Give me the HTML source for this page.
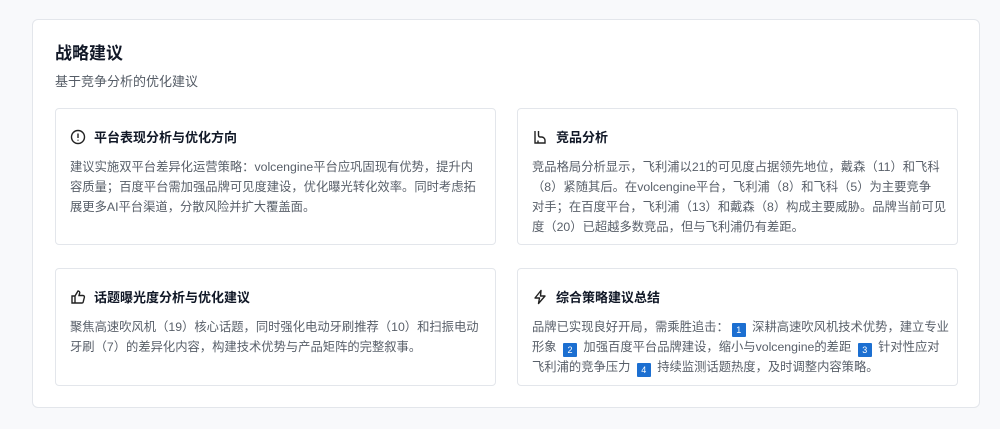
<!DOCTYPE html>
<html><head><meta charset="utf-8"><style>
*{margin:0;padding:0;box-sizing:border-box}
body{width:1000px;height:429px;background:#f8f9fb;font-family:"Liberation Sans","Noto Sans CJK SC",sans-serif;position:relative;overflow:hidden}
.outer{position:absolute;left:32px;top:19px;width:948px;height:389px;background:#fff;border:1px solid #e3e6eb;border-radius:6px}
h1{position:absolute;left:55px;top:39px;font-size:17px;font-weight:bold;color:#111827}
.sub{position:absolute;left:55px;top:71px;font-size:13px;color:#555c66}
.card{position:absolute;background:#fff;border:1px solid #e3e6eb;border-radius:4px;padding:0 0 0 14px}
.t{position:absolute;left:14px;top:18px;font-size:13px;font-weight:bold;color:#111827;display:flex;align-items:center;white-space:nowrap}
.t svg{margin-right:8px}
.b{position:absolute;left:14px;top:48px;font-size:12.3px;line-height:20px;color:#585f69;white-space:nowrap}
.n{display:inline-block;width:14px;height:14px;background:#1c6fd1;color:#fff;font-size:9px;line-height:14px;text-align:center;vertical-align:-2px;margin:0 3px;border-radius:1px}
</style></head><body>
<div class="outer"></div>
<h1>战略建议</h1>
<div class="sub">基于竞争分析的优化建议</div>

<div class="card" style="left:55px;top:108px;width:441px;height:137px">
<div class="t"><svg width="16" height="16" viewBox="0 0 16 16" fill="none" stroke="#222" stroke-width="1.4"><circle cx="8" cy="8" r="6.5"/><path d="M8 4.5v4.5M8 10.8v.8"/></svg>平台表现分析与优化方向</div>
<div class="b">建议实施双平台差异化运营策略：volcengine平台应巩固现有优势，提升内<br>容质量；百度平台需加强品牌可见度建设，优化曝光转化效率。同时考虑拓<br>展更多AI平台渠道，分散风险并扩大覆盖面。</div>
</div>

<div class="card" style="left:517px;top:108px;width:441px;height:137px">
<div class="t"><svg width="16" height="16" viewBox="0 0 16 16" fill="none" stroke="#222" stroke-width="1.4"><path d="M3 2v12h10v-2.5c0-2-1.5-3.5-3.5-3.5H8c-1 0-1.5-1-1.5-2V2"/><path d="M6 14v-2.5"/></svg>竞品分析</div>
<div class="b">竞品格局分析显示，飞利浦以21的可见度占据领先地位，戴森（11）和飞科<br>（8）紧随其后。在volcengine平台，飞利浦（8）和飞科（5）为主要竞争<br>对手；在百度平台，飞利浦（13）和戴森（8）构成主要威胁。品牌当前可见<br>度（20）已超越多数竞品，但与飞利浦仍有差距。</div>
</div>

<div class="card" style="left:55px;top:268px;width:441px;height:118px">
<div class="t"><svg width="16" height="16" viewBox="0 0 16 16" fill="none" stroke="#222" stroke-width="1.4"><path d="M2 7h3v7H2zM5 7l3-5c1 0 2 .8 1.7 2L9 6.5h4c1 0 1.6.8 1.4 1.7l-1.2 4.7c-.2.7-.8 1.1-1.5 1.1H5"/></svg>话题曝光度分析与优化建议</div>
<div class="b">聚焦高速吹风机（19）核心话题，同时强化电动牙刷推荐（10）和扫振电动<br>牙刷（7）的差异化内容，构建技术优势与产品矩阵的完整叙事。</div>
</div>

<div class="card" style="left:517px;top:268px;width:441px;height:118px">
<div class="t"><svg width="16" height="16" viewBox="0 0 16 16" fill="none" stroke="#222" stroke-width="1.4" stroke-linejoin="round"><path d="M9 1.5L3 9h4.5l-1 5.5L13 7H8.5z"/></svg>综合策略建议总结</div>
<div class="b">品牌已实现良好开局，需乘胜追击：<span class="n">1</span> 深耕高速吹风机技术优势，建立专业<br>形象 <span class="n">2</span> 加强百度平台品牌建设，缩小与volcengine的差距 <span class="n">3</span> 针对性应对<br>飞利浦的竞争压力 <span class="n">4</span> 持续监测话题热度，及时调整内容策略。</div>
</div>
</body></html>
